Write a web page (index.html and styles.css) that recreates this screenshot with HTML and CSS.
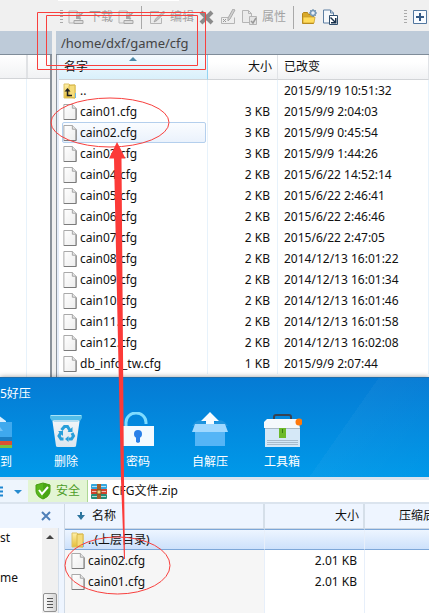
FILE: index.html
```html
<!DOCTYPE html>
<html lang="zh-CN">
<head>
<meta charset="utf-8">
<title>/home/dxf/game/cfg</title>
<link rel="stylesheet" href="styles.css">
</head>
<body>
<svg class="defs" aria-hidden="true">
  <defs>
    <linearGradient id="paper" x1="0" y1="0" x2="1" y2="1"><stop offset="0" stop-color="#fff"/><stop offset="1" stop-color="#ededed"/></linearGradient>
    <linearGradient id="gold" x1="0" y1="0" x2="0" y2="1"><stop offset="0" stop-color="#fff0a8"/><stop offset="1" stop-color="#e5bd38"/></linearGradient>
    <linearGradient id="glass" x1="0" y1="0" x2="0" y2="1"><stop offset="0" stop-color="#f4f6f8"/><stop offset="1" stop-color="#dbe6ef"/></linearGradient>
    <symbol id="file" viewBox="0 0 14 17"><path d="M.5 .5h9l4 4v12H.5z" fill="url(#paper)" stroke="#a2a2a2"/><path d="M9.500 .5v4h4" fill="#e4e4e4" stroke="#a2a2a2"/><path d="M.5 16.500h13V5" fill="none" stroke="#777"/></symbol>
    <symbol id="folder" viewBox="0 0 14 16"><path d="M1 1h5l1 1h5v13H1z" fill="url(#gold)" stroke="#dcc267"/><path d="M6 2.500l6-.5v13l-6-1z" fill="#f5dc7a" stroke="#d8b84b"/><path d="M12.500 10v5" stroke="#6cb8e8"/></symbol>
    <symbol id="transfer" viewBox="0 0 16 16"><path d="M1 2h8l3 3v9H1z" fill="#ececec" stroke="#b8b8b8"/><path d="M9 2v3h3" fill="none" stroke="#b8b8b8"/><path d="M15.500 4l-4 4 2 2H8V5l2 2 4-4z" fill="#a7a7a7"/><path d="M6 11.500h9v3H6z" fill="#dcdcdc" stroke="#a7a7a7"/></symbol>
  </defs>
</svg>

<main class="desktop">
  <section class="explorer">
    <div class="tabstrip"></div>
    <div class="toolbar">
      <i class="grip"></i>
      <button class="tool" type="button"><svg><use href="#transfer"/></svg>下载</button>
      <button class="tool" type="button" aria-label="下载"><svg><use href="#transfer"/></svg></button>
      <i class="sep"></i>
      <button class="tool" type="button"><svg viewBox="0 0 16 16"><path d="M10 2.500H1.500v12h11V9" fill="#ebebeb" stroke="#b5b5b5"/><path d="M14.500 2l-8 8-1.500 3 3-1.500 8-8z" fill="#c4c4c4" stroke="#999" stroke-width=".7"/></svg>编辑</button>
      <button class="tool" type="button" aria-label="删除"><svg viewBox="0 0 16 16"><path d="M2 3l11 11M13 3L2 14" stroke="#8b8b8b" stroke-width="4"/></svg></button>
      <button class="tool" type="button" aria-label="重命名"><svg viewBox="0 0 16 16"><path d="M8 8.500H1.500v6h13v-6" fill="#eee" stroke="#b5b5b5"/><path d="M3 10l3 3M6 10l-3 3" stroke="#999"/><path d="M15 1l-5 9-2 2v-3l5-9z" fill="#d0d0d0" stroke="#aaa"/></svg></button>
      <button class="tool" type="button"><svg viewBox="0 0 16 16"><path d="M1.500 1.500h6l3 3v9h-9z" fill="#ebebeb" stroke="#b5b5b5"/><path d="M7.500 1.500v3h3" fill="none" stroke="#b5b5b5"/><path d="M8.500 7.500h7v8h-7z" fill="#e4e4e4" stroke="#b5b5b5"/><path d="M10 12l2 2 3-5" fill="none" stroke="#999" stroke-width="1.500"/></svg>属性</button>
      <i class="sep"></i>
      <button class="tool" type="button" aria-label="新建目录"><svg viewBox="0 0 16 16"><path d="M1.500 14.500v-10l1-1h4l1 2h5v9z" fill="#d9a92a" stroke="#b3861b"/><path d="M2 8h12l-1 6H2z" fill="#ffdc5c" stroke="#c5992a" stroke-width=".7"/><circle cx="12" cy="4" r="2.500" fill="#e9f1f8" stroke="#7c9dbb" stroke-width="1.500"/><path d="M12 0v1.500M12 6.500V8M8 4h1.500M14.500 4H16M9.300 1.300l1 1M13.700 5.700l1 1M14.700 1.300l-1 1" stroke="#6689a9"/></svg></button>
      <button class="tool" type="button" aria-label="同步"><svg viewBox="0 0 16 16"><path d="M1.500 1h7l3 3v10h-10z" fill="#f5f8fb" stroke="#5d7fa3"/><path d="M8.500 1v3h3" fill="none" stroke="#5d7fa3"/><path d="M7.500 6.500h8v9h-8z" fill="#fff" stroke="#31506f"/><path d="M9 8l4 4V9h1.500v5.500H9V13h3L8 9z" fill="#17304b"/></svg></button>
      <i class="grip push"></i>
      <button class="tool" type="button" aria-label="添加"><svg viewBox="0 0 16 16"><path d="M1.500 1.500h13v13h-13z" fill="#f8fbff" stroke="#52779f"/><path d="M8 4v8M4 8h8" stroke="#355b87" stroke-width="2"/></svg></button>
    </div>
    <div class="panes">
      <div class="local">
        <div class="path"></div>
        <div class="local-head"><span></span></div>
        <div class="local-body"></div>
      </div>
      <div class="remote">
        <div class="path">/home/dxf/game/cfg</div>
        <table class="files">
          <colgroup><col><col class="c-size"><col class="c-date"></colgroup>
          <thead><tr><th class="sorted">名字</th><th class="num">大小</th><th>已改变</th></tr></thead>
          <tbody>
            <tr><td><span class="name"><svg viewBox="0 0 14 16"><use href="#folder" width="14" height="16"/><path d="M4.500 7v5.500H9" fill="none" stroke="#222" stroke-width="1.500"/><path d="M1.500 8.500l3-3.500 3 3.500z" fill="#222"/></svg>..</span></td><td></td><td>2015/9/19 10:51:32</td></tr>
            <tr><td><span class="name"><svg><use href="#file"/></svg>cain01.cfg</span></td><td>3 KB</td><td>2015/9/9 2:04:03</td></tr>
            <tr class="hover"><td><span class="name"><svg><use href="#file"/></svg>cain02.cfg</span></td><td>3 KB</td><td>2015/9/9 0:45:54</td></tr>
            <tr><td><span class="name"><svg><use href="#file"/></svg>cain03.cfg</span></td><td>3 KB</td><td>2015/9/9 1:44:26</td></tr>
            <tr><td><span class="name"><svg><use href="#file"/></svg>cain04.cfg</span></td><td>2 KB</td><td>2015/6/22 14:52:14</td></tr>
            <tr><td><span class="name"><svg><use href="#file"/></svg>cain05.cfg</span></td><td>2 KB</td><td>2015/6/22 2:46:41</td></tr>
            <tr><td><span class="name"><svg><use href="#file"/></svg>cain06.cfg</span></td><td>2 KB</td><td>2015/6/22 2:46:46</td></tr>
            <tr><td><span class="name"><svg><use href="#file"/></svg>cain07.cfg</span></td><td>2 KB</td><td>2015/6/22 2:47:05</td></tr>
            <tr><td><span class="name"><svg><use href="#file"/></svg>cain08.cfg</span></td><td>2 KB</td><td>2014/12/13 16:01:22</td></tr>
            <tr><td><span class="name"><svg><use href="#file"/></svg>cain09.cfg</span></td><td>2 KB</td><td>2014/12/13 16:01:34</td></tr>
            <tr><td><span class="name"><svg><use href="#file"/></svg>cain10.cfg</span></td><td>2 KB</td><td>2014/12/13 16:01:46</td></tr>
            <tr><td><span class="name"><svg><use href="#file"/></svg>cain11.cfg</span></td><td>2 KB</td><td>2014/12/13 16:01:58</td></tr>
            <tr><td><span class="name"><svg><use href="#file"/></svg>cain12.cfg</span></td><td>2 KB</td><td>2014/12/13 16:02:08</td></tr>
            <tr><td><span class="name"><svg><use href="#file"/></svg>db_info_tw.cfg</span></td><td>1 KB</td><td>2015/9/9 2:07:44</td></tr>
          </tbody>
        </table>
      </div>
    </div>
  </section>

  <section class="archiver">
    <header class="banner">
      <div class="title">5好压</div>
      <nav class="actions">
        <button type="button"><svg viewBox="0 0 36 36"><path d="M18 0l12 9v2H12z" fill="#d7eeff"/><path d="M0 10h36v15H0z" fill="#3fa9ee"/><path d="M18 7l9 12h-9z" fill="#74c3f6"/><path d="M0 25h36v4H0z" fill="#1b7fc4"/><path d="M0 29h36v4H0z" fill="#dc5132"/><path d="M0 33h36v3H0z" fill="#7bc043"/></svg>解压到</button>
        <button type="button"><svg viewBox="0 0 36 36"><path d="M4 6h28l-4 28q0 1-2 1H10q-2 0-2-1z" fill="url(#glass)"/><path d="M2 3h32v3l-2 3H4L2 6z" fill="#52bde9"/><path d="M3 3.500h30" stroke="#a9e3f8"/><path d="M5 8h26l-1 2H6z" fill="#b5def2"/><g fill="none" stroke="#289fda" stroke-width="3"><path d="M13.500 18l3-3.500h3l2.500 4M24 21l1.500 3-2 3h-3M15.500 27h-2.500l-2-3 2-3.500"/></g><path d="M24.500 15v5h-5zM20.500 24v6l-3.500-3zM10 19l5 0 0 5z" fill="#289fda"/></svg>删除</button>
        <button type="button"><svg viewBox="0 0 36 36"><path d="M6 15V10.500a10 9.500 0 0 1 20 0v1.500" fill="none" stroke="#7fdcff" stroke-width="3"/><path d="M2 14h32v20H2z" fill="#f3faff"/><circle cx="18" cy="22" r="4" fill="#2a80e8"/><path d="M16 22h4v8l-2 1-2-1z" fill="#2a80e8"/></svg>密码</button>
        <button type="button"><svg viewBox="0 0 36 36"><path d="M0 14q6-9 13-4h10q7-5 13 4z" fill="#1e94de"/><path d="M3 20h30v14H3z" fill="#55b5f6"/><path d="M3 12h30l3 8H0z" fill="#9fd8ff"/><path d="M18 0l9 9h-5v3h-8V9H9z" fill="#f5fbff"/></svg>自解压</button>
        <button type="button"><svg viewBox="0 0 40 36"><path d="M12 8V5q0-2 2-2h13q2 0 2 2v3" fill="none" stroke="#374353" stroke-width="2"/><path d="M5 7h31l2 9H2V10z" fill="#f4f9fc"/><path d="M3 16h35v19H3z" fill="#d5e8f7"/><path d="M3 16.500h35" stroke="#aabac5"/><path d="M5 28.500h31M5 30.500h31M5 32.500h31" stroke="#a9bbcb"/><path d="M17 16h7v10h-7z" fill="#6cb92b"/><path d="M20.500 17v4" stroke="#397b14"/><circle cx="37" cy="10" r="3.500" fill="#ff790c"/></svg>工具箱</button>
      </nav>
    </header>
    <div class="location">
      <button class="menu" type="button" aria-label="菜单"><svg viewBox="0 0 28 22"><path d="M0 7.500h3M0 11.500h3M0 15.500h3" stroke="#1c86d1" stroke-width="2"/><path d="M14 10h8l-4 4z" fill="#278bcf"/></svg></button>
      <button class="safe" type="button"><svg viewBox="0 0 16 18"><path d="M8 1l7 2v6q0 5-7 8-7-3-7-8V3z" fill="#58b71d" stroke="#469c12"/><path d="M8 1l7 2v6q0 5-7 8z" fill="#49a514"/><path d="M4 8l3 4 6-7" fill="none" stroke="#fff" stroke-width="2"/></svg>安全</button>
      <div class="archive"><svg viewBox="0 0 16 17"><rect x="0" y="1" width="16" height="5" rx="1" fill="#35a7df"/><rect x="0" y="6" width="16" height="5" fill="#d1432d"/><rect x="0" y="11" width="16" height="5" rx="1" fill="#258d78"/><path d="M1 3.500h14M1 8.500h14M1 13.500h14" stroke="#fff" stroke-opacity=".65"/><path d="M6 1h4v15H6z" fill="#a65d2c"/><path d="M6 7h4v4H6z" fill="#f2d277" stroke="#795024"/></svg>CFG文件.zip</div>
    </div>
    <div class="split">
      <aside class="tree">
        <div class="tree-head"><button type="button" aria-label="关闭"><svg viewBox="0 0 10 10"><path d="M1 1l8 8M9 1L1 9" stroke="#4e7fb8" stroke-width="2"/></svg></button></div>
        <div class="tree-body">
          <div class="nodes"><span>st</span><span>me</span></div>
          <div class="scrollbar"><svg class="up" viewBox="0 0 8 4"><path d="M0 4l4-4 4 4z" fill="#444"/></svg><span class="thumb"></span></div>
        </div>
      </aside>
      <div class="contents">
        <table class="entries">
          <colgroup><col><col class="e-size"><col class="e-packed"></colgroup>
          <thead><tr><th><span class="name"><svg class="arrow" viewBox="0 0 8 8"><path d="M3 0h2v3h3L4 8 0 3h3z" fill="#2d759e"/></svg>名称</span></th><th class="num">大小</th><th class="packed">压缩后</th></tr></thead>
          <tbody>
            <tr class="selected"><td><span class="name"><svg><use href="#folder"/></svg>..(上层目录)</span></td><td></td><td></td></tr>
            <tr><td><span class="name"><svg><use href="#file"/></svg>cain02.cfg</span></td><td>2.01 KB</td><td></td></tr>
            <tr><td><span class="name"><svg><use href="#file"/></svg>cain01.cfg</span></td><td>2.01 KB</td><td></td></tr>
            <tr class="rest"><td></td><td></td><td></td></tr>
          </tbody>
        </table>
      </div>
    </div>
  </section>

  <svg class="marks" width="429" height="613" viewBox="0 0 429 613" aria-hidden="true">
    <g fill="none" stroke="#f8403e">
      <path d="M37.500 12.500h168v57h-168zM46.500 15.500h151v50h-151z"/>
      <ellipse cx="110" cy="122.500" rx="59" ry="24.500"/>
      <ellipse cx="117.500" cy="565.500" rx="52.500" ry="28.500"/>
    </g>
    <path d="M117 142l8.500 16.500h-4L124 480l1 79h-1l-3-79-7-321.500h-5z" fill="#fc3a38"/>
  </svg>
</main>
</body>
</html>
```
FILE: styles.css
```css
* { box-sizing: border-box; }
body {
  margin: 0;
  font: 12px/20px "Noto Sans", "Noto Sans CJK SC", sans-serif;
  color: #111;
  background: #fff;
  overflow: hidden;
}
button {
  font: inherit;
  color: inherit;
  border: 0;
  padding: 0;
  background: none;
}
svg { display: block; flex: none; }
.defs { position: absolute; width: 0; height: 0; }
.desktop {
  position: relative;
  min-height: 100vh;
  display: flex;
  flex-direction: column;
}
.marks { position: absolute; left: 0; top: 0; pointer-events: none; }

/* remote explorer */
.explorer { background: #f0f0f0; }
.tabstrip { height: 1px; width: 121px; margin-left: 58px; background: #fff; }
.toolbar {
  display: flex;
  align-items: center;
  gap: 5px;
  height: 30px;
  padding: 2px 1px 0 60px;
}
.tool { display: flex; align-items: center; gap: 5px; color: #a3a3a3; white-space: nowrap; }
.tool svg { width: 16px; height: 16px; }
.grip {
  width: 3px;
  height: 15px;
  background: repeating-linear-gradient(#aaa 0 1px, transparent 1px 3px);
}
.push { margin-left: auto; }
.sep { width: 1px; height: 23px; margin: 0 2px; background: #a9a9a9; }
.panes { display: flex; gap: 4px; }
.local { width: 52px; display: flex; flex-direction: column; border-right: 2px solid #8a929b; }
.path {
  height: 24px;
  padding-left: 5px;
  font-size: 13px;
  line-height: 24px;
  color: #444;
  background: #becbd9;
  border-bottom: 1px solid #7f8c99;
}
.local .path { margin-right: -2px; }
.local-head {
  height: 24px;
  padding-left: 26px;
  background: linear-gradient(#fff, #f1f2f4);
  border-bottom: 1px solid #d2d4d7;
}
.local-head span { display: block; width: 2px; height: 23px; background: #e0e2e5; }
.local-body { flex: 1; background: linear-gradient(90deg, #fff 26px, #e7f2fb 26px 27px, #fff 27px); }
.remote { flex: 1; min-width: 0; background: #fff; border-left: 1px solid #8a929b; }
.remote .path { margin-left: -1px; }
table { width: 100%; border-collapse: separate; border-spacing: 0; table-layout: fixed; }
th, td { padding: 0; font-weight: 400; text-align: left; white-space: nowrap; }
.name { display: flex; align-items: center; gap: 3px; }
.files { border-left: 2px solid #e4ecf8; padding-bottom: 3px; }
.c-size { width: 70px; }
.c-date { width: 151px; }
.files th {
  height: 25px;
  background: linear-gradient(#fff 30%, #f1f2f4);
  border-bottom: 1px solid #d2d4d7;
  border-right: 1px solid #e0e3e7;
}
.files th:first-child { padding-left: 5px; }
.files .sorted {
  position: relative;
  background: linear-gradient(#f5fbff, #d9f0fb);
  border-right-color: #93d3f3;
}
.sorted::after {
  content: "";
  position: absolute;
  top: 2px;
  left: 50%;
  margin-left: -4px;
  border: 4px solid transparent;
  border-top: 0;
  border-bottom-color: #4d89a8;
}
.files td { height: 21px; border-right: 1px solid #e7f2fb; }
.files th:last-child, .files td:last-child { padding-left: 6px; }
.files td:first-child { padding-left: 4px; }
.files td:nth-child(2) { text-align: right; padding-right: 7px; }
.files .num { text-align: right; padding-right: 5px; }
.files .name svg { width: 14px; height: 16px; }
.files .hover td:first-child { padding: 0; }
.hover .name {
  height: 21px;
  margin: 0 1px 0 3px;
  border: 1px solid #b4cfed;
  border-radius: 2px;
  background: linear-gradient(#fafcff, #eaf2fc);
}

/* archive manager */
.archiver { flex: 1; display: flex; flex-direction: column; border-top: 1px solid #1d6fae; background: #eef5ff; box-shadow: 0 0 5px #0006; }
.banner {
  height: 99px;
  padding-top: 6px;
  color: #fff;
  background:
    linear-gradient(125deg, transparent 76%, #ffffff08 76%, transparent),
    linear-gradient(#057bd4, #0099e9);
  overflow: hidden;
}
.title { height: 20px; }
.actions { display: flex; margin-left: -42px; padding-top: 8px; }
.actions button { width: 72px; flex: none; display: flex; flex-direction: column; align-items: center; gap: 4px; }
.actions svg { width: 36px; height: 36px; }
.actions button:last-child svg { width: 40px; }
.location {
  display: flex;
  height: 27px;
  border-top: 3px solid #dbe4ee;
  border-bottom: 2px solid #dbe4ee;
  background: #fff;
}
.menu { width: 28px; background: #eef5fd; }
.menu svg { width: 28px; height: 22px; }
.safe {
  display: flex;
  align-items: center;
  gap: 5px;
  width: 60px;
  padding-left: 7px;
  color: #4d9c28;
  background: #e3f5d4;
  border-right: 1px solid #add894;
}
.safe svg { width: 16px; height: 18px; }
.archive { display: flex; align-items: center; gap: 5px; padding-left: 3px; }
.archive svg { width: 16px; height: 17px; }
.split { flex: 1; display: flex; }
.tree { width: 65px; display: flex; flex-direction: column; border-right: 1px solid #cfd9e5; }
.tree-head { height: 24px; padding-right: 13px; display: flex; align-items: center; justify-content: flex-end; }
.tree-head svg { width: 10px; height: 10px; }
.tree-body { flex: 1; display: flex; margin-right: 5px; background: #fff; border-right: 1px solid #d5dfeb; }
.nodes { flex: 1; display: flex; flex-direction: column; gap: 20px; }
.scrollbar { width: 16px; padding: 7px 1px 1px; display: flex; flex-direction: column; align-items: center; background: #f0f0f0; }
.up { width: 8px; height: 4px; }
.thumb {
  width: 14px;
  height: 19px;
  margin-top: auto;
  border: 1px solid #929292;
  border-radius: 2px;
  background:
    repeating-linear-gradient(#555 0 1px, transparent 1px 3px) center / 6px 10px no-repeat,
    linear-gradient(90deg, #fafafa, #d5d5d5);
}
.contents { flex: 1; min-width: 0; display: flex; }
.entries { height: 100%; }
.e-size { width: 100px; }
.e-packed { width: 64px; }
.entries th { height: 25px; border-right: 2px solid #d5dfe9; border-bottom: 1px solid #cdd8e5; background: #eef5ff; }
.entries th:last-child, .entries td:last-child { border-right: 0; }
.entries th:first-child { padding-left: 12px; }
.entries .arrow { width: 8px; height: 8px; margin-right: 4px; }
.entries td { height: 21px; background: #fff; border-right: 1px solid #e7effa; }
.entries td:first-child { padding-left: 6px; background: #f6f6f6; }
.entries .num { text-align: right; padding-right: 4px; }
.entries td:nth-child(2) { text-align: right; padding-right: 7px; }
.entries .packed { padding-left: 34px; }
.entries td svg { width: 14px; height: 16px; }
.entries .selected td, .entries .selected td:first-child {
  background: linear-gradient(#edf5ff, #cde1fb);
  border-top: 1px solid #7da7d8;
  border-bottom: 1px solid #7da7d8;
}
.selected .name { height: 19px; }
.entries .rest td { height: auto; }
```
